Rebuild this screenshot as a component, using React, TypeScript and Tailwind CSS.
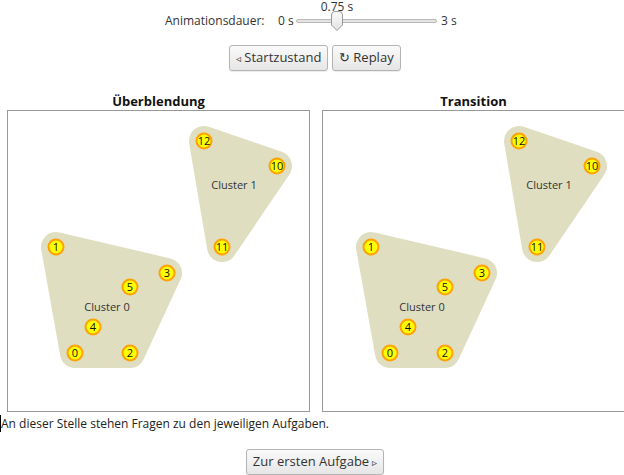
const nodes: { id: number; x: number; y: number }[] = [
  { id: 12, x: 196, y: 30 },
  { id: 10, x: 269, y: 55 },
  { id: 11, x: 214, y: 136 },
  { id: 1, x: 48, y: 136 },
  { id: 3, x: 159, y: 162 },
  { id: 5, x: 122, y: 176 },
  { id: 4, x: 85, y: 216 },
  { id: 0, x: 67, y: 242 },
  { id: 2, x: 122, y: 242 },
];

const hulls = [
  { points: "196,30 269,55 214,136", label: "Cluster 1", lx: 226, ly: 78 },
  { points: "48,136 159,162 122,242 67,242", label: "Cluster 0", lx: 99, ly: 200 },
];

function ClusterPanel({ title }: { title: string }) {
  return (
    <div className="flex w-[303px] flex-col items-center">
      <h2 className="text-[13px] font-bold leading-[18px] text-[#111]">{title}</h2>
      <div className="h-[302px] w-[303px] border border-[#999] bg-white">
        <svg width="301" height="300" viewBox="0 0 301 300">
          {hulls.map((h) => (
            <g key={h.label}>
              <polygon
                points={h.points}
                fill="#dfdec1"
                stroke="#dfdec1"
                strokeWidth="30"
                strokeLinejoin="round"
              />
              <text x={h.lx} y={h.ly} fontSize="11" fill="#333" textAnchor="middle">
                {h.label}
              </text>
            </g>
          ))}
          {nodes.map((n) => (
            <g key={n.id}>
              <circle cx={n.x} cy={n.y} r="7.5" fill="#ffff00" stroke="#ffa200" strokeWidth="2" />
              <text x={n.x} y={n.y + 4} fontSize="11" fill="#111" textAnchor="middle">
                {n.id}
              </text>
            </g>
          ))}
        </svg>
      </div>
    </div>
  );
}

function Button({ children }: { children: React.ReactNode }) {
  return (
    <button className="h-[26px] rounded-[3px] border border-[#b4b4b4] bg-gradient-to-b from-[#fafafa] to-[#e6e6e6] px-[6px] text-[13px] text-[#333] shadow-[0_1px_1px_rgba(0,0,0,0.08)]">
      {children}
    </button>
  );
}

function Slider() {
  return (
    <div className="relative h-[20px] w-[141px]">
      <div className="absolute left-0 right-0 top-[8px] h-[4px] rounded-full border border-[#b8b8b8] bg-[#e4e4e4]" />
      <svg className="absolute left-[34px] top-0" width="14" height="20" viewBox="0 0 14 20">
        <defs>
          <linearGradient id="thumb" x1="0" y1="0" x2="0" y2="1">
            <stop offset="0" stopColor="#fbfbfb" />
            <stop offset="1" stopColor="#e2e2e2" />
          </linearGradient>
        </defs>
        <path
          d="M1.5 4 Q1.5 0.5 5 0.5 L9 0.5 Q12.5 0.5 12.5 4 L12.5 14 L7 19.5 L1.5 14 Z"
          fill="url(#thumb)"
          stroke="#9a9a9a"
        />
      </svg>
      <span className="absolute left-[41px] top-[-12px] -translate-x-1/2 whitespace-nowrap text-[12px] leading-[16px] text-[#333]">
        0.75 s
      </span>
    </div>
  );
}

export default function App() {
  return (
    <div className="h-[475px] w-[624px] overflow-hidden bg-white font-['Open_Sans',sans-serif] text-[#222]">
      <div className="flex w-[630px] flex-col">
        <div className="flex h-[40px] items-center pl-[165px] pt-[1px] text-[12px] text-[#333]">
          <span className="w-[113px]">Animationsdauer:</span>
          <span className="w-[18px]">0 s</span>
          <Slider />
          <span className="ml-[4px]">3 s</span>
        </div>
        <div className="mt-[5px] flex justify-center gap-[4px]">
          <Button>
            <span className="mr-[3px] text-[10px]">◃</span>Startzustand
          </Button>
          <Button>
            <span className="mr-[3px]">↻</span>Replay
          </Button>
        </div>
        <div className="mt-[21px] flex gap-[12px] pl-[7px]">
          <ClusterPanel title="Überblendung" />
          <ClusterPanel title="Transition" />
        </div>
        <p className="mt-[2px] text-[12px] leading-[20px] text-[#222]">
          <span className="border-l border-[#000]">An dieser Stelle stehen Fragen zu den jeweiligen Aufgaben.</span>
        </p>
        <div className="mt-[15px] flex justify-center">
          <Button>
            Zur ersten Aufgabe<span className="ml-[3px] text-[10px]">▹</span>
          </Button>
        </div>
      </div>
    </div>
  );
}
